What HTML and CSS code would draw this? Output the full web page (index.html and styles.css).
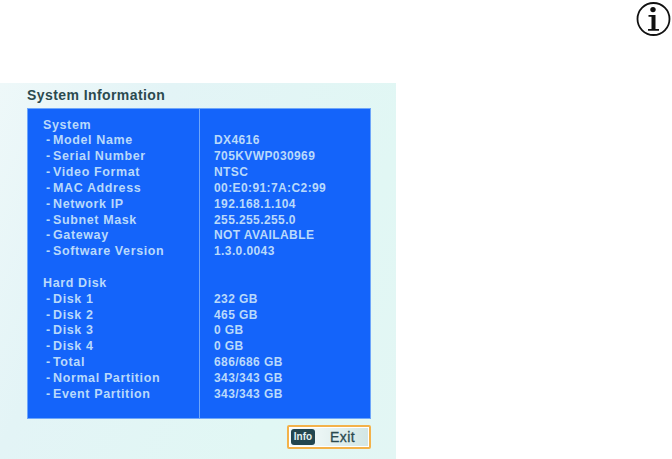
FILE: index.html
```html
<!DOCTYPE html>
<html lang="en">
<head>
  <meta charset="UTF-8" />
  <title>System Information</title>
  <link rel="stylesheet" href="styles.css">
</head>
<body>
  <div class="top">
    <svg class="info-icon" width="36" height="36" viewBox="0 0 36 36">
      <circle cx="17.500" cy="18" r="16" fill="none" stroke="#111" stroke-width="1.800"/>
      <circle cx="17" cy="8.600" r="2.700" fill="#111"/>
      <path d="M12.500 14h7v14h3.500v1.800h-11v-1.800h3.500v-12.200h-3z" fill="#111"/>
    </svg>
  </div>
  <div class="screen">
    <div class="title">System Information</div>
    <div class="table">
      <div class="col-left">
        <div class="row head">System</div>
        <div class="row"><span class="dash">-</span>Model Name</div>
        <div class="row"><span class="dash">-</span>Serial Number</div>
        <div class="row"><span class="dash">-</span>Video Format</div>
        <div class="row"><span class="dash">-</span>MAC Address</div>
        <div class="row"><span class="dash">-</span>Network IP</div>
        <div class="row"><span class="dash">-</span>Subnet Mask</div>
        <div class="row"><span class="dash">-</span>Gateway</div>
        <div class="row"><span class="dash">-</span>Software Version</div>
        <div class="row"></div>
        <div class="row head">Hard Disk</div>
        <div class="row"><span class="dash">-</span>Disk 1</div>
        <div class="row"><span class="dash">-</span>Disk 2</div>
        <div class="row"><span class="dash">-</span>Disk 3</div>
        <div class="row"><span class="dash">-</span>Disk 4</div>
        <div class="row"><span class="dash">-</span>Total</div>
        <div class="row"><span class="dash">-</span>Normal Partition</div>
        <div class="row"><span class="dash">-</span>Event Partition</div>
      </div>
      <div class="col-right">
        <div class="row"></div>
        <div class="row">DX4616</div>
        <div class="row">705KVWP030969</div>
        <div class="row">NTSC</div>
        <div class="row">00:E0:91:7A:C2:99</div>
        <div class="row">192.168.1.104</div>
        <div class="row">255.255.255.0</div>
        <div class="row">NOT AVAILABLE</div>
        <div class="row">1.3.0.0043</div>
        <div class="row"></div>
        <div class="row"></div>
        <div class="row">232 GB</div>
        <div class="row">465 GB</div>
        <div class="row">0 GB</div>
        <div class="row">0 GB</div>
        <div class="row">686/686 GB</div>
        <div class="row">343/343 GB</div>
        <div class="row">343/343 GB</div>
      </div>
    </div>
    <div class="footer">
      <div class="exit-btn">
        <span class="key">Info</span>
        <span class="exit-label">Exit</span>
      </div>
    </div>
  </div>
</body>
</html>
```

FILE: styles.css
```css
body {
  margin: 0;
  background: #fff;
  font-family: "Liberation Sans", Arial, sans-serif;
}
.top {
  height: 83px;
  display: flex;
  justify-content: flex-end;
  align-items: flex-start;
  box-sizing: border-box;
}
.info-icon {
  margin-top: 1px;
}
.screen {
  width: 396px;
  height: 376px;
  padding: 0 25px 0 27px;
  box-sizing: border-box;
  background: linear-gradient(115deg, #eef8f9, #e3f4f6 30%, #e1f7f4 75%, #e3f6f4);
}
.title {
  height: 25px;
  line-height: 25px;
  font-size: 14px;
  font-weight: bold;
  color: #2b4a4f;
  letter-spacing: 0.42px;
}
.table {
  display: flex;
  height: 311px;
  box-sizing: border-box;
  background: #1464fa;
  border: 1px solid #6ea6fa;
  color: #b9d9fb;
  font-weight: bold;
}
.col-left {
  width: 172px;
  padding: 8.500px 0 0 15px;
  box-sizing: border-box;
  border-right: 1px solid #6ea6fa;
  font-size: 12.500px;
  letter-spacing: 0.62px;
}
.col-right {
  padding: 8.500px 0 0 14px;
  font-size: 12px;
  letter-spacing: 0.4px;
}
.row {
  height: 15.850px;
  line-height: 15.850px;
  white-space: nowrap;
}
.col-left .row:not(.head) {
  padding-left: 3px;
}
.dash {
  display: inline-block;
  width: 7px;
}
.footer {
  display: flex;
  justify-content: flex-end;
  padding-top: 6px;
}
.exit-btn {
  width: 84px;
  height: 24px;
  box-sizing: border-box;
  border: 2px solid #f3b24a;
  border-radius: 2px;
  box-shadow: inset 0 0 0 1px #fff;
  background: linear-gradient(90deg, #f8fcfb, #eaf5f4 40%, #d2e6e4);
  display: flex;
  align-items: center;
  padding-left: 2px;
}
.key {
  width: 24px;
  height: 16px;
  line-height: 16px;
  border-radius: 3px;
  background: #23464f;
  color: #e4f2f2;
  font-size: 10px;
  font-weight: bold;
  text-align: center;
}
.exit-label {
  margin-left: 15px;
  font-size: 14px;
  color: #2b4a4f;
  -webkit-text-stroke: 0.3px #2b4a4f;
  letter-spacing: 0.4px;
}
```
